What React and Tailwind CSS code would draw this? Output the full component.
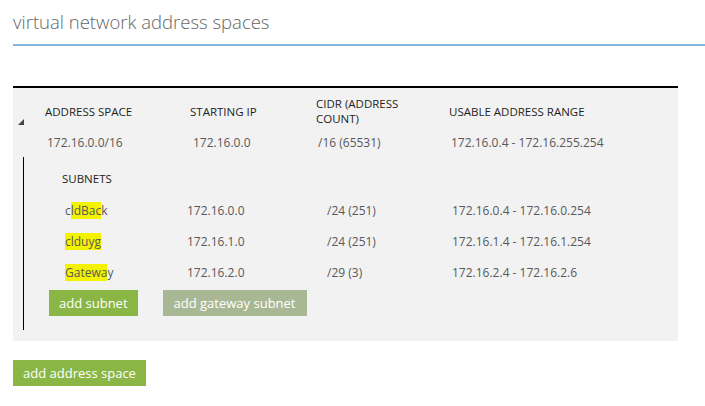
const subnets = [
  { pre: 'c', hl: 'ldBac', post: 'k', ip: '172.16.0.0', cidr: '/24 (251)', range: '172.16.0.4 - 172.16.0.254' },
  { pre: '', hl: 'clduyg', post: '', ip: '172.16.1.0', cidr: '/24 (251)', range: '172.16.1.4 - 172.16.1.254' },
  { pre: '', hl: 'Gatewa', post: 'y', ip: '172.16.2.0', cidr: '/29 (3)', range: '172.16.2.4 - 172.16.2.6' },
];

export default function App() {
  return (
    <div className="w-[705px] h-[406px] bg-white pl-[13px] font-['Open_Sans',sans-serif] overflow-hidden">
      {/* title */}
      <div className="h-[46px] border-b-2 border-[#88b6e0]">
        <h1 className="pt-[9px] text-[18.5px] leading-[26px] font-light text-[#666]">virtual network address spaces</h1>
      </div>

      {/* address space panel */}
      <div className="mt-[40px] w-[665px] border-t-2 border-black bg-[#f2f2f2] pt-[8px] pb-[11px]">
        <div className="grid grid-cols-[32px_145px_126px_133px_1fr] h-[30px] items-center text-[11.5px] leading-[15px] text-[#1e1e1e]">
          <div className="self-end pl-[5px] pb-[1px]">
            <svg width="6" height="6" viewBox="0 0 6 6">
              <polygon points="6,0 6,6 0,6" fill="#444" />
            </svg>
          </div>
          <div>ADDRESS SPACE</div>
          <div>STARTING IP</div>
          <div>CIDR (ADDRESS<br />COUNT)</div>
          <div>USABLE ADDRESS RANGE</div>
        </div>
        <div className="mt-[7px] grid grid-cols-[32px_145px_126px_133px_1fr] h-[20px] items-center text-[12px] text-[#595959]">
          <div></div>
          <div className="pl-[2px]">172.16.0.0/16</div>
          <div className="pl-[3px]">172.16.0.0</div>
          <div className="pl-[2px]">/16 (65531)</div>
          <div className="pl-[2px]">172.16.0.4 - 172.16.255.254</div>
        </div>

        {/* subnets */}
        <div className="ml-[10px] mt-[4px] border-l border-black pt-[12px] pb-[14px]">
          <div className="pl-[38px] h-[20px] flex items-center text-[11.5px] text-[#1e1e1e]">SUBNETS</div>
          <div className="mt-[6px]">
            {subnets.map((s, i) => (
              <div key={i} className="grid grid-cols-[163px_140px_125px_1fr] h-[31px] items-center text-[12px] text-[#595959]">
                <div className="pl-[41px]">
                  {s.pre}
                  <span className="bg-[#f3f300]">{s.hl}</span>
                  {s.post}
                </div>
                <div>{s.ip}</div>
                <div>{s.cidr}</div>
                <div>{s.range}</div>
              </div>
            ))}
          </div>
          <div className="mt-[2px] pl-[25px] flex gap-[25px]">
            <button className="h-[26px] px-[10px] bg-[#8ab645] text-white text-[13px] leading-[26px]">add subnet</button>
            <button className="h-[26px] px-[11px] bg-[#a9b894] text-white text-[13px] leading-[26px]">add gateway subnet</button>
          </div>
        </div>
      </div>

      <button className="mt-[19px] h-[26px] px-[10px] bg-[#8ab645] text-white text-[13px] leading-[26px]">add address space</button>
    </div>
  );
}
